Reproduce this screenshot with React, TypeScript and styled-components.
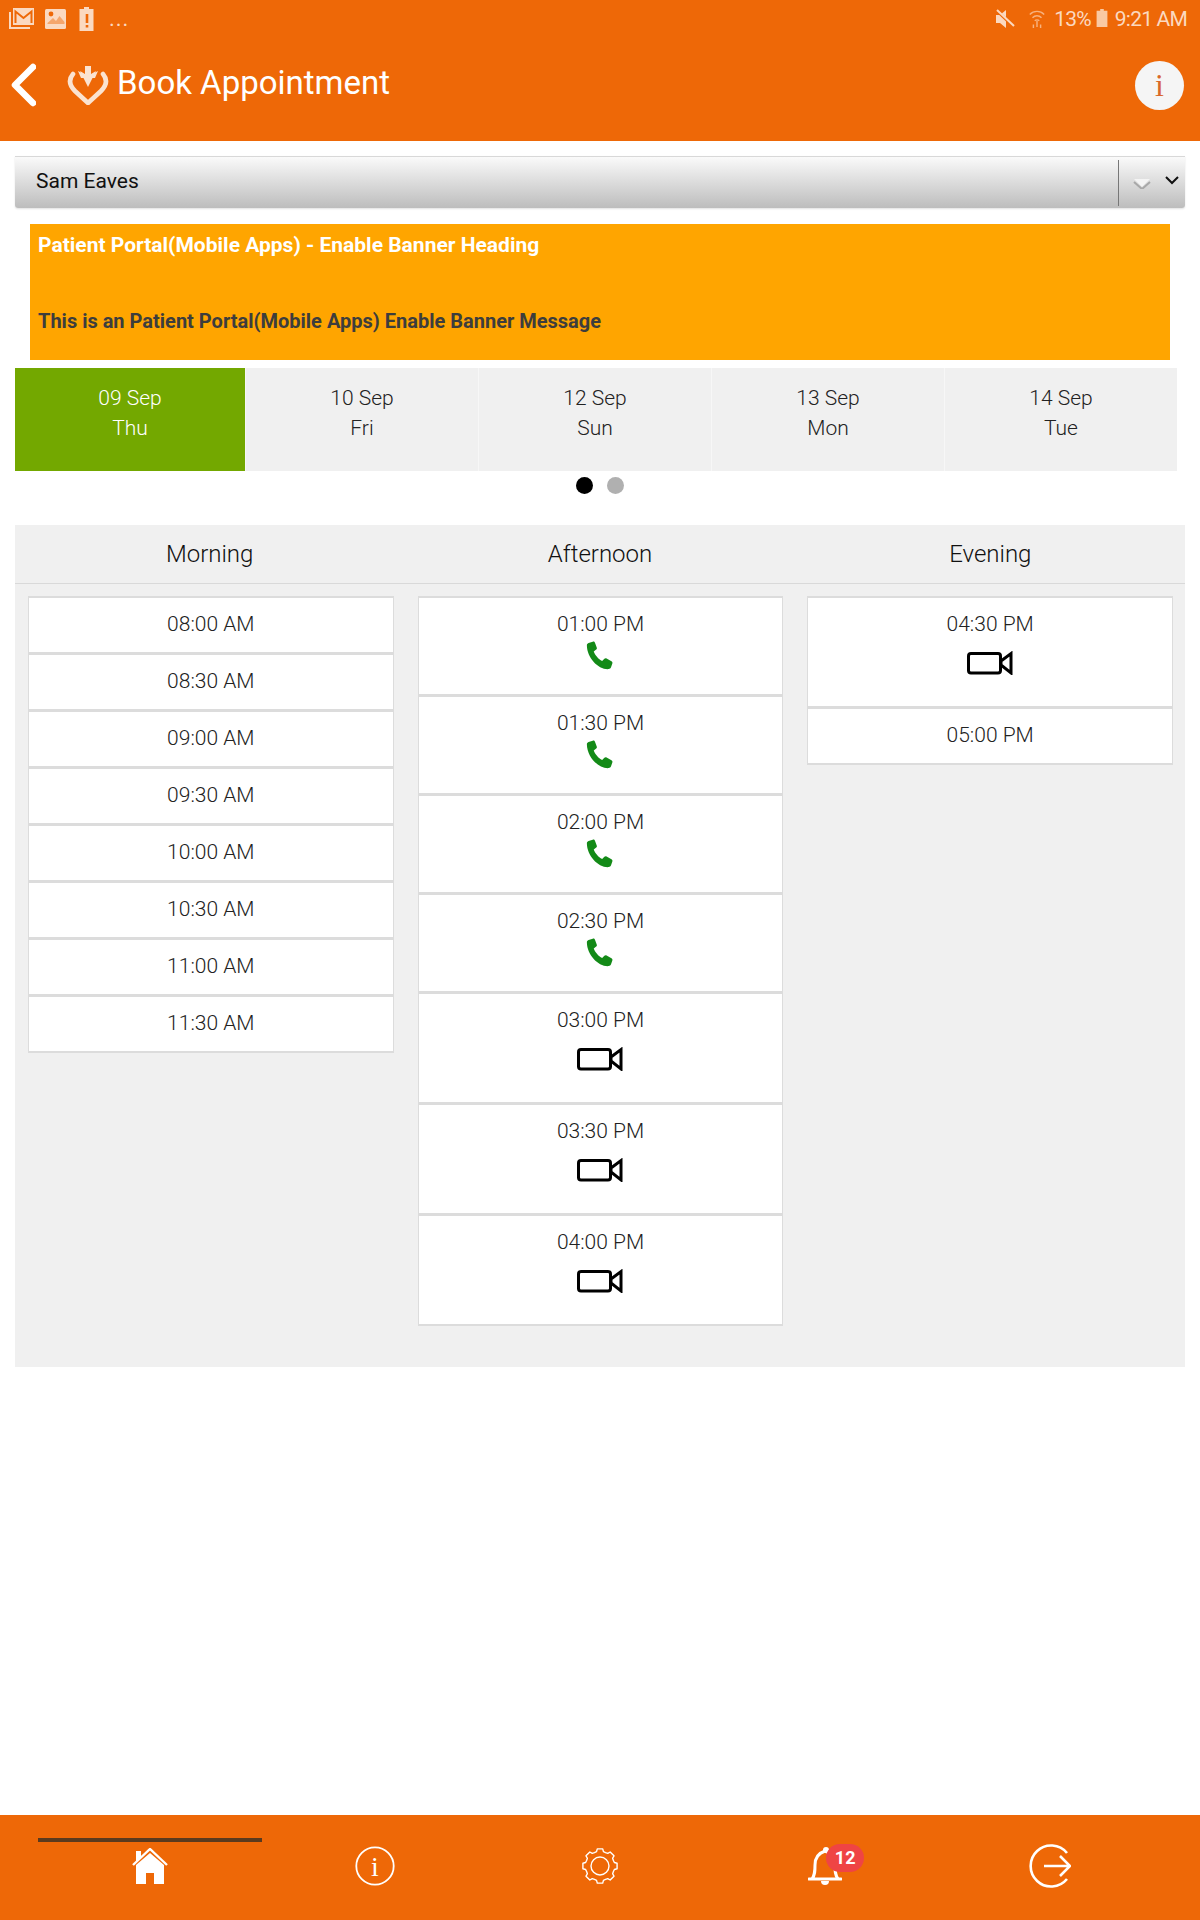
import React from "react";
import styled, { createGlobalStyle } from "styled-components";

const Global = createGlobalStyle`
  html, body { margin: 0; padding: 0; background: #fff; }
  body { font-family: Roboto, "Liberation Sans", sans-serif; }
  * { box-sizing: border-box; }
`;

const Page = styled.div`
  width: 1200px;
  height: 1920px;
  display: flex;
  flex-direction: column;
  background: #fff;
`;

const Header = styled.header`
  height: 141px;
  background: #ee6807;
  display: flex;
  flex-direction: column;
  color: #fff;
`;

const StatusBar = styled.div`
  height: 40px;
  padding: 6px 13px 0 9px;
  display: flex;
  align-items: flex-start;
  justify-content: space-between;
  color: #fbd9c0;
`;

const StatusGroup = styled.div`
  display: flex;
  align-items: center;
  gap: 10px;
`;

const StatusRight = styled(StatusGroup)`
  gap: 0;
  font-size: 21px;
  letter-spacing: -0.8px;
  line-height: 26px;
`;

const Dots = styled.span`
  font-size: 22px;
  line-height: 26px;
  margin-left: 4px;
  letter-spacing: 1px;
`;

const TitleBar = styled.div`
  flex: 1;
  display: flex;
  align-items: flex-start;
  padding: 20px 16px 0 10px;
`;

const BackIcon = styled.svg`
  width: 26px;
  height: 44px;
  margin-top: 3px;
`;

const AppLogo = styled.svg`
  width: 42px;
  height: 40px;
  margin: 5px 0 0 31px;
`;

const Title = styled.h1`
  margin: 2px 0 0 8px;
  font-size: 33px;
  line-height: 42px;
  font-weight: 400;
  flex: 1;
`;

const InfoButton = styled.div`
  width: 49px;
  height: 49px;
  border-radius: 50%;
  background: #f5f5f5;
  color: #d9682a;
  font-family: "Liberation Serif", serif;
  font-size: 32px;
  line-height: 49px;
  text-align: center;
  margin-top: 1px;
`;

const Main = styled.main`
  flex: 1;
  padding: 15px 15px 0;
  display: flex;
  flex-direction: column;
`;

const Select = styled.div`
  height: 52px;
  border-top: 1px solid #d8d8d8;
  border-radius: 0 0 3px 3px;
  background: linear-gradient(#fafafa, #bdbdbd);
  box-shadow: 0 1px 2px rgba(0, 0, 0, 0.12);
  display: flex;
  align-items: center;
  padding-left: 21px;
  font-size: 21px;
  color: #111;
`;

const SelectValue = styled.span`
  flex: 1;
  margin-top: -4px;
`;

const SelectArrows = styled.div`
  width: 67px;
  height: 46px;
  border-left: 1px solid #777;
  display: flex;
  align-items: center;
  padding-left: 14px;
  gap: 14px;
`;

const Banner = styled.section`
  margin: 16px 15px 0;
  height: 136px;
  background: #ffa500;
  padding: 9px 7px 9px 8px;
  font-size: 20px;
  font-weight: 700;
  line-height: 24px;
`;

const BannerHeading = styled.div`
  color: #fff;
  font-size: 21px;
`;

const BannerMessage = styled.div`
  color: #3d3d3d;
  margin-top: 52px;
`;

const DateRow = styled.div`
  margin: 8px 8px 0 0;
  display: grid;
  grid-template-columns: 230px repeat(4, 1fr);
  column-gap: 1px;
  height: 103px;
  background: #f7f7f7;
`;

const DateCell = styled.div<{ $active?: boolean }>`
  background: ${(p) => (p.$active ? "#73a800" : "#f0f0f0")};
  color: ${(p) => (p.$active ? "#fff" : "#222")};
  font-size: 21px;
  font-weight: 300;
  line-height: 30px;
  text-align: center;
  padding-top: 15px;
  display: flex;
  flex-direction: column;
`;

const Pager = styled.div`
  display: flex;
  justify-content: center;
  gap: 14px;
  height: 54px;
  padding-top: 6px;
`;

const Dot = styled.span<{ $active?: boolean }>`
  width: 17px;
  height: 17px;
  border-radius: 50%;
  background: ${(p) => (p.$active ? "#000" : "#b0b0b0")};
`;

const Schedule = styled.section`
  background: #f0f0f0;
  height: 842px;
`;

const ScheduleHead = styled.div`
  height: 59px;
  border-bottom: 1px solid #d9d9d9;
  display: grid;
  grid-template-columns: repeat(3, 1fr);
  padding: 0 12px;
  column-gap: 25px;
`;

const PeriodTitle = styled.div`
  text-align: center;
  font-size: 24px;
  font-weight: 300;
  line-height: 59px;
  color: #111;
`;

const Columns = styled.div`
  display: grid;
  grid-template-columns: repeat(3, 1fr);
  column-gap: 24px;
  padding: 13px 12px 0 13px;
`;

const Column = styled.div`
  display: flex;
  flex-direction: column;
`;

const Slot = styled.div<{ $h: number }>`
  height: ${(p) => p.$h}px;
  background: #fff;
  border: 1px solid #dcdcdc;
  border-bottom-width: 2px;
  border-top-width: 2px;
  margin-top: -1px;
  text-align: center;
  font-size: 21px;
  font-weight: 300;
  line-height: 24px;
  color: #222;
  padding-top: 14px;
  display: flex;
  flex-direction: column;
  align-items: center;
`;

const PhoneIcon = styled.svg`
  width: 31px;
  height: 31px;
  margin-top: 5px;
`;

const VideoIcon = styled.svg`
  width: 46px;
  height: 24px;
  margin-top: 15px;
`;

const Footer = styled.footer`
  height: 105px;
  background: #ee6807;
  display: grid;
  grid-template-columns: repeat(5, 1fr);
  padding: 0 37px;
`;

const NavItem = styled.div`
  display: flex;
  justify-content: center;
  align-items: center;
  padding-bottom: 3px;
  position: relative;
`;

const ActiveBar = styled.span`
  position: absolute;
  top: 23px;
  left: 1px;
  right: 0;
  height: 4px;
  background: #5a3a1e;
`;

const NavIcon = styled.svg<{ $w: number; $h: number }>`
  width: ${(p) => p.$w}px;
  height: ${(p) => p.$h}px;
`;

const Badge = styled.span`
  position: absolute;
  top: 29px;
  left: 50%;
  margin-left: 1px;
  width: 38px;
  height: 28px;
  border-radius: 14px;
  background: #ef4444;
  color: #fff;
  font-size: 18px;
  font-weight: 700;
  line-height: 28px;
  text-align: center;
`;

const Phone = () => (
  <PhoneIcon viewBox="0 0 28 28">
    <path
      fill="#138a17"
      d="M3.2 1.8 7 .6c1-.3 1.7.2 2 1l1.6 4.2c.3.8.1 1.4-.5 1.9L7.900 9.400c1 3 4.300 7 7.600 8.700l2-2c.6-.5 1.300-.6 2-.2l4.400 2.400c.8.4 1.100 1.100.8 2l-1.200 3.500c-.4 1-1 1.500-2.200 1.600C12 26 1.800 15 1.700 4c0-1.100.5-1.800 1.500-2.200Z"
    />
  </PhoneIcon>
);

const Video = () => (
  <VideoIcon viewBox="0 0 46 24">
    <rect x="1.500" y="2.500" width="32" height="19.500" rx="2.500" fill="none" stroke="#000" strokeWidth="3" />
    <path d="M34 10 44 2.600v19.300L34 14Z" fill="none" stroke="#000" strokeWidth="3" />
  </VideoIcon>
);

function gearPath(): string {
  const teeth = 8;
  const pts: string[] = [];
  for (let i = 0; i < teeth; i++) {
    const a = (i / teeth) * Math.PI * 2 - Math.PI / 2;
    const step = (Math.PI * 2) / teeth;
    const seq: [number, number][] = [
      [14.5, -0.5 * step],
      [14.8, -0.3 * step],
      [17.3, -0.2 * step],
      [17.3, 0.2 * step],
      [14.8, 0.3 * step],
    ];
    seq.forEach(([r, o]) => {
      pts.push(`${(18 + r * Math.cos(a + o)).toFixed(2)} ${(18 + r * Math.sin(a + o)).toFixed(2)}`);
    });
  }
  return `M${pts.join("L")}Z`;
}

const morning = ["08:00 AM", "08:30 AM", "09:00 AM", "09:30 AM", "10:00 AM", "10:30 AM", "11:00 AM", "11:30 AM"];
const afternoon: [string, "phone" | "video"][] = [
  ["01:00 PM", "phone"],
  ["01:30 PM", "phone"],
  ["02:00 PM", "phone"],
  ["02:30 PM", "phone"],
  ["03:00 PM", "video"],
  ["03:30 PM", "video"],
  ["04:00 PM", "video"],
];
const dates = [
  ["09 Sep", "Thu"],
  ["10 Sep", "Fri"],
  ["12 Sep", "Sun"],
  ["13 Sep", "Mon"],
  ["14 Sep", "Tue"],
];

export default function App() {
  return (
    <Page>
      <Global />
      <Header>
        <StatusBar>
          <StatusGroup>
            <svg width="26" height="24" viewBox="0 0 26 24">
              <path d="M1 5v16h20" fill="none" stroke="#fbd9c0" strokeWidth="2" />
              <rect x="4" y="1" width="21" height="17" fill="#fbd9c0" />
              <path d="M6.500 16V4.500l8 6.500 8-6.500V16" fill="none" stroke="#ee6807" strokeWidth="2" />
            </svg>
            <svg width="22" height="22" viewBox="0 0 22 22">
              <rect width="21" height="20" y="1" rx="1.500" fill="#fbd9c0" />
              <circle cx="6" cy="6" r="2.400" fill="#ee6807" />
              <path d="M2.500 15 8 10l3 3 3.500-5 5 6v2h-17Z" fill="#ee6807" opacity=".45" />
            </svg>
            <svg width="16" height="24" viewBox="0 0 16 24" style={{ marginLeft: 2 }}>
              <path d="M5 0h5v2h4.500v22H.5V2H5Z" fill="#fbd9c0" />
              <path d="M6.700 7h2.600v9H6.700ZM6.700 18h2.600v2.600H6.700Z" fill="#ee6807" />
            </svg>
            <Dots>...</Dots>
          </StatusGroup>
          <StatusRight>
            <svg width="20" height="20" viewBox="0 0 20 20">
              <path d="M1 6h4l6-5v18l-6-5H1Z" fill="#fbd9c0" />
              <path d="M1 1l18 17" stroke="#ee6807" strokeWidth="3" />
              <path d="M2 1l17 16" stroke="#fbd9c0" strokeWidth="2" />
            </svg>
            <svg width="18" height="22" viewBox="0 0 20 24" style={{ marginLeft: 13 }}>
              <path d="M2 7a11 11 0 0 1 16 0M5 10.500a7 7 0 0 1 10 0M7.500 14a3.500 3.500 0 0 1 5 0" fill="none" stroke="#f7b27f" strokeWidth="1.600" />
              <path d="M10 14v7M6 18v4M14 18v4" stroke="#f7b27f" strokeWidth="1.600" />
            </svg>
            <span style={{ marginLeft: 8 }}>13%</span>
            <svg width="12" height="18" viewBox="0 0 12 20" style={{ margin: "0 7px 2px 5px" }}>
              <path d="M4 0h4v2h4v18H0V2h4Z" fill="#f9c9a3" />
            </svg>
            <span>9:21 AM</span>
          </StatusRight>
        </StatusBar>
        <TitleBar>
          <BackIcon viewBox="0 0 26 44">
            <path d="M23 4 5 22l18 18" fill="none" stroke="#fff" strokeWidth="6.500" strokeLinecap="round" strokeLinejoin="round" />
          </BackIcon>
          <AppLogo viewBox="0 0 42 40">
            <path d="M6 9C1 15 3 21 8 26l13 12 13-12c5-5 7-11 2-17" fill="none" stroke="#fbe3d0" strokeWidth="4.600" strokeLinecap="round" />
            <path d="M18 1h6v8l5-3-8 16-8-16 5 3Z" fill="#fbe3d0" />
            <path d="M11 6l10 5 10-5-3 7H14Z" fill="#fbe3d0" />
          </AppLogo>
          <Title>Book Appointment</Title>
          <InfoButton>i</InfoButton>
        </TitleBar>
      </Header>
      <Main>
        <Select>
          <SelectValue>Sam Eaves</SelectValue>
          <SelectArrows>
            <svg width="18" height="12" viewBox="0 0 18 12">
              <path d="M1 5l8 7 8-7" fill="none" stroke="#a8a8a8" strokeWidth="2" />
              <path d="M1 2h16l-8 8Z" fill="#f4f4f4" />
            </svg>
            <svg width="14" height="10" viewBox="0 0 14 10" style={{ marginTop: -6 }}>
              <path d="M1 2l6 6 6-6" fill="none" stroke="#111" strokeWidth="2" />
            </svg>
          </SelectArrows>
        </Select>
        <Banner>
          <BannerHeading>Patient Portal(Mobile Apps) - Enable Banner Heading</BannerHeading>
          <BannerMessage>This is an Patient Portal(Mobile Apps) Enable Banner Message</BannerMessage>
        </Banner>
        <DateRow>
          {dates.map(([d, w], i) => (
            <DateCell key={d} $active={i === 0}>
              <span>{d}</span>
              <span>{w}</span>
            </DateCell>
          ))}
        </DateRow>
        <Pager>
          <Dot $active />
          <Dot />
        </Pager>
        <Schedule>
          <ScheduleHead>
            <PeriodTitle>Morning</PeriodTitle>
            <PeriodTitle>Afternoon</PeriodTitle>
            <PeriodTitle>Evening</PeriodTitle>
          </ScheduleHead>
          <Columns>
            <Column>
              {morning.map((t) => (
                <Slot key={t} $h={58}>
                  {t}
                </Slot>
              ))}
            </Column>
            <Column>
              {afternoon.map(([t, k]) => (
                <Slot key={t} $h={k === "phone" ? 100 : 112}>
                  {t}
                  {k === "phone" ? <Phone /> : <Video />}
                </Slot>
              ))}
            </Column>
            <Column>
              <Slot $h={112}>
                04:30 PM
                <Video />
              </Slot>
              <Slot $h={58}>05:00 PM</Slot>
            </Column>
          </Columns>
        </Schedule>
      </Main>
      <Footer>
        <NavItem>
          <ActiveBar />
          <NavIcon $w={36} $h={36} viewBox="0 0 36 36">
            <path d="M4 3h5v6l-5 5Z" fill="#fff" />
            <path d="M1 17 18 1l17 16" fill="none" stroke="#fff" strokeWidth="2.400" />
            <path d="M4 17 18 5l14 12v19H22V25h-8v11H4Z" fill="#fff" />
          </NavIcon>
        </NavItem>
        <NavItem>
          <NavIcon $w={40} $h={40} viewBox="0 0 40 40">
            <circle cx="20" cy="20" r="18.700" fill="none" stroke="#fff" strokeWidth="1.800" />
            <text x="20" y="30" textAnchor="middle" fontFamily="Liberation Serif, serif" fontSize="28" fill="#fff">i</text>
          </NavIcon>
        </NavItem>
        <NavItem>
          <NavIcon $w={36} $h={36} viewBox="0 0 36 36">
            <path d={gearPath()} fill="none" stroke="#fff" strokeWidth="1.400" strokeLinejoin="round" />
            <circle cx="18" cy="18" r="9" fill="none" stroke="#fff" strokeWidth="1.400" />
          </NavIcon>
        </NavItem>
        <NavItem>
          <NavIcon $w={34} $h={40} viewBox="0 0 34 40">
            <path d="M1 33h32M4 33c3-4 3-8 3-14 0-7 4-12 10-14" fill="none" stroke="#fff" strokeWidth="3" strokeLinecap="round" />
            <path d="M17 5c6 2 10 7 10 14 0 6 0 10 3 14" fill="none" stroke="#fff" strokeWidth="3" />
            <circle cx="18" cy="4" r="3" fill="#fff" />
            <path d="M13 35h8a4 4 0 0 1-8 0Z" fill="#fff" />
          </NavIcon>
          <Badge>12</Badge>
        </NavItem>
        <NavItem>
          <NavIcon $w={42} $h={44} viewBox="0 0 42 44">
            <path d="M38 9A20.500 20.500 0 1 0 38 35" fill="none" stroke="#fff" strokeWidth="2.600" />
            <path d="M15 22h25M31 12l10 10-10 10" fill="none" stroke="#fff" strokeWidth="2.600" />
          </NavIcon>
        </NavItem>
      </Footer>
    </Page>
  );
}
